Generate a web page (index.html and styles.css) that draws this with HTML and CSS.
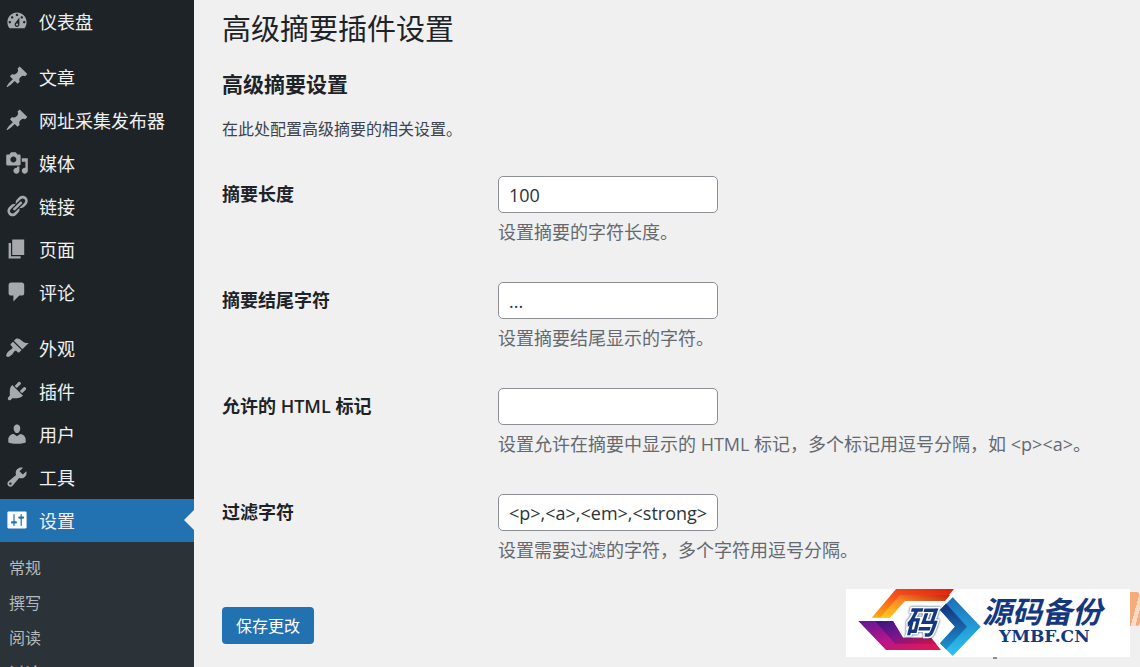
FILE: index.html
```
<!DOCTYPE html>
<html lang="zh-CN">
<head>
    <meta charset="UTF-8">
    <meta name="viewport" content="width=device-width, initial-scale=1.0">
    <title>高级摘要插件设置</title>
    <link rel="stylesheet" href="styles.css">
</head>
<body>
    <nav class="sidebar">
        <ul class="menu">
            <li>
                <a href="#"><svg viewBox="0 0 20 20"><path d="M3.76 16h12.48c1.1-1.37 1.76-3.11 1.76-5 0-4.42-3.58-8-8-8s-8 3.58-8 8c0 1.89.66 3.63 1.76 5zM10 4c.55 0 1 .45 1 1s-.45 1-1 1-1-.45-1-1 .45-1 1-1zM6 6c.55 0 1 .45 1 1s-.45 1-1 1-1-.45-1-1 .45-1 1-1zm8 0c.55 0 1 .45 1 1s-.45 1-1 1-1-.45-1-1 .45-1 1-1zm-5.37 5.55L12 7v6c0 1.1-.9 2-2 2s-2-.9-2-2c0-.57.24-1.08.63-1.45zM4 10c.55 0 1 .45 1 1s-.45 1-1 1-1-.45-1-1 .45-1 1-1zm12 0c.55 0 1 .45 1 1s-.45 1-1 1-1-.45-1-1 .45-1 1-1zm-5 3c0-.55-.45-1-1-1s-1 .45-1 1 .45 1 1 1 1-.45 1-1z"/></svg>仪表盘</a>
            </li>
            <li class="group-start">
                <a href="#"><svg viewBox="0 0 20 20"><path d="M10.44 3.02l1.82-1.82 6.36 6.35-1.83 1.82c-1.05-.68-2.48-.57-3.41.36l-.75.75c-.92.93-1.04 2.35-.35 3.41l-1.83 1.82-2.41-2.41-2.8 2.79c-.42.42-3.38 2.71-3.8 2.29s1.86-3.39 2.28-3.81l2.79-2.79L4.1 9.36l1.83-1.82c1.05.69 2.48.57 3.4-.36l.75-.75c.93-.92 1.05-2.35.36-3.41z"/></svg>文章</a>
            </li>
            <li>
                <a href="#"><svg viewBox="0 0 20 20"><path d="M10.44 3.02l1.82-1.82 6.36 6.35-1.83 1.82c-1.05-.68-2.48-.57-3.41.36l-.75.75c-.92.93-1.04 2.35-.35 3.41l-1.83 1.82-2.41-2.41-2.8 2.79c-.42.42-3.38 2.71-3.8 2.29s1.86-3.39 2.28-3.81l2.79-2.79L4.1 9.36l1.83-1.82c1.05.69 2.48.57 3.4-.36l.75-.75c.93-.92 1.05-2.35.36-3.41z"/></svg>网址采集发布器</a>
            </li>
            <li>
                <a href="#"><svg viewBox="0 0 20 20"><path d="M13 11V4c0-.55-.45-1-1-1h-1.67L9 1H5L3.67 3H2c-.55 0-1 .45-1 1v7c0 .55.45 1 1 1h10c.55 0 1-.45 1-1zM7 4.5c1.38 0 2.5 1.12 2.5 2.5S8.38 9.5 7 9.5 4.5 8.38 4.5 7 5.62 4.5 7 4.5zM14 6h5v10.5c0 1.38-1.12 2.5-2.5 2.5S14 17.88 14 16.5s1.12-2.5 2.5-2.5c.17 0 .34.02.5.05V9h-3V6zm-4 8.05V13h2v3.5c0 1.38-1.12 2.5-2.5 2.5S7 17.88 7 16.5 8.12 14 9.5 14c.17 0 .34.02.5.05z"/></svg>媒体</a>
            </li>
            <li>
                <a href="#"><svg viewBox="0 0 20 20"><path d="M17.74 2.76c1.68 1.69 1.68 4.41 0 6.1l-1.53 1.52c-1.12 1.12-2.7 1.47-4.14 1.09l2.62-2.61.76-.77.76-.76c.84-.84.84-2.2 0-3.04-.84-.85-2.2-.85-3.04 0l-.77.76-3.38 3.38c-.37-1.44-.02-3.02 1.1-4.14l1.52-1.53c1.69-1.68 4.42-1.68 6.1 0zM8.59 13.43l5.34-5.34c.42-.42.42-1.1 0-1.52-.44-.43-1.13-.39-1.53 0l-5.33 5.34c-.42.42-.42 1.1 0 1.52.44.43 1.13.39 1.52 0zm-.76 2.29l4.14-4.15c.38 1.44.03 3.02-1.09 4.14l-1.52 1.53c-1.69 1.68-4.41 1.68-6.1 0-1.68-1.68-1.68-4.42 0-6.1l1.53-1.52c1.12-1.12 2.7-1.47 4.14-1.1l-4.14 4.15c-.85.84-.85 2.2 0 3.05.84.84 2.2.84 3.04 0z"/></svg>链接</a>
            </li>
            <li>
                <a href="#"><svg viewBox="0 0 20 20"><path d="M6 15V2h10v13H6zm-1 1h8v2H3V5h2v11z"/></svg>页面</a>
            </li>
            <li>
                <a href="#"><svg viewBox="0 0 20 20"><path d="M5 2h9c1.1 0 2 .9 2 2v7c0 1.1-.9 2-2 2h-2l-5 5v-5H5c-1.1 0-2-.9-2-2V4c0-1.1.9-2 2-2z"/></svg>评论</a>
            </li>
            <li class="group-start">
                <a href="#"><svg viewBox="0 0 20 20"><path d="M14.48 11.06L7.41 3.99l1.5-1.5c.5-.56 2.3-.47 3.51.32 1.21.8 1.43 1.28 2.91 2.1 1.18.64 2.45 1.26 4.45.85zm-.71.71L6.7 4.7 4.93 6.47c-.39.39-.39 1.02 0 1.41l1.06 1.06c.39.39.39 1.03 0 1.42-.6.6-1.43 1.11-2.21 1.69-.35.26-.7.53-1.01.84C1.43 14.23.4 16.08 1.4 17.07c.99 1 2.84-.03 4.18-1.36.31-.31.58-.66.85-1.02.57-.78 1.08-1.61 1.69-2.21.39-.39 1.02-.39 1.41 0l1.06 1.06c.39.39 1.02.39 1.41 0z"/></svg>外观</a>
            </li>
            <li>
                <a href="#"><svg viewBox="0 0 20 20"><path d="M13.11 4.36L9.87 7.6 8 5.73l3.24-3.24c.35-.34 1.05-.2 1.56.32.52.51.66 1.21.31 1.55zm-8 1.77l.91-1.12 9.01 9.01-1.19.84c-.71.71-2.63 1.16-3.82 1.16H6.14L4.9 17.26c-.59.59-1.54.59-2.12 0-.59-.58-.59-1.53 0-2.12l1.24-1.24v-3.88c0-1.13.4-3.19 1.09-3.89zm7.26 3.97l3.24-3.24c.34-.35 1.04-.21 1.55.31.52.51.66 1.21.31 1.55l-3.24 3.25z"/></svg>插件</a>
            </li>
            <li>
                <a href="#"><svg viewBox="0 0 20 20"><path d="M10 9.25c-2.27 0-2.73-3.44-2.73-3.44C7 4.02 7.82 2 9.97 2c2.16 0 2.98 2.02 2.71 3.81 0 0-.41 3.44-2.68 3.44zm0 2.57L12.72 10c2.39 0 4.52 2.33 4.52 4.53v2.49s-3.65 1.13-7.24 1.13c-3.65 0-7.24-1.13-7.24-1.13v-2.49c0-2.25 1.94-4.48 4.47-4.48z"/></svg>用户</a>
            </li>
            <li>
                <a href="#"><svg viewBox="0 0 20 20"><path d="M16.68 9.77c-1.34 1.34-3.3 1.67-4.95.99l-5.41 6.52c-.99.99-2.59.99-3.58 0s-.99-2.59 0-3.57l6.52-5.42c-.68-1.65-.35-3.61.99-4.95 1.28-1.28 3.12-1.62 4.72-1.06l-2.89 2.89 2.82 2.82 2.86-2.87c.53 1.58.18 3.39-1.08 4.65zM3.81 16.21c.4.39 1.04.39 1.43 0 .4-.4.4-1.04 0-1.43-.39-.4-1.03-.4-1.43 0-.39.39-.39 1.03 0 1.43z"/></svg>工具</a>
            </li>
            <li class="current">
                <a href="#"><svg viewBox="0 0 20 20"><path d="M18 16V4c0-.55-.45-1-1-1H3c-.55 0-1 .45-1 1v12c0 .55.45 1 1 1h14c.55 0 1-.45 1-1zM8 11h1c.55 0 1 .45 1 1s-.45 1-1 1H8v1.5c0 .28-.22.5-.5.5s-.5-.22-.5-.5V13H6c-.55 0-1-.45-1-1s.45-1 1-1h1V5.5c0-.28.22-.5.5-.5s.5.22.5.5V11zm5-2h-1c-.55 0-1-.45-1-1s.45-1 1-1h1V5.5c0-.28.22-.5.5-.5s.5.22.5.5V7h1c.55 0 1 .45 1 1s-.45 1-1 1h-1v5.5c0 .28-.22.5-.5.5s-.5-.22-.5-.5V9z"/></svg>设置</a>
            </li>
        </ul>
        <ul class="submenu">
            <li><a href="#">常规</a></li>
            <li><a href="#">撰写</a></li>
            <li><a href="#">阅读</a></li>
            <li><a href="#">讨论</a></li>
        </ul>
    </nav>

    <main class="content">
        <h1>高级摘要插件设置</h1>
        <h2>高级摘要设置</h2>
        <p class="intro">在此处配置高级摘要的相关设置。</p>

        <form>
            <div class="form-row">
                <label for="excerpt-length">摘要长度</label>
                <div class="field">
                    <input type="text" id="excerpt-length" value="100">
                    <p class="description">设置摘要的字符长度。</p>
                </div>
            </div>
            <div class="form-row">
                <label for="excerpt-end">摘要结尾字符</label>
                <div class="field">
                    <input type="text" id="excerpt-end" value="...">
                    <p class="description">设置摘要结尾显示的字符。</p>
                </div>
            </div>
            <div class="form-row">
                <label for="allowed-tags">允许的 HTML 标记</label>
                <div class="field">
                    <input type="text" id="allowed-tags">
                    <p class="description">设置允许在摘要中显示的 HTML 标记，多个标记用逗号分隔，如 &lt;p&gt;&lt;a&gt;。</p>
                </div>
            </div>
            <div class="form-row">
                <label for="filter-chars">过滤字符</label>
                <div class="field">
                    <input type="text" id="filter-chars" value="&lt;p&gt;,&lt;a&gt;,&lt;em&gt;,&lt;strong&gt;">
                    <p class="description">设置需要过滤的字符，多个字符用逗号分隔。</p>
                </div>
            </div>
            <button type="submit">保存更改</button>
        </form>
    </main>

    <div class="side-tab"></div>
    <div class="watermark">
        <svg viewBox="0 0 284 68">
            <defs>
                <linearGradient id="orange" x1="0" y1="1" x2="1" y2="0">
                    <stop offset="0" stop-color="#ffb010"/>
                    <stop offset="0.5" stop-color="#f7541f"/>
                    <stop offset="1" stop-color="#d9200f"/>
                </linearGradient>
                <linearGradient id="yellow" x1="0" y1="1" x2="1" y2="0">
                    <stop offset="0" stop-color="#ffd21c"/>
                    <stop offset="0.5" stop-color="#fb8a25"/>
                    <stop offset="1" stop-color="#c4200f"/>
                </linearGradient>
                <linearGradient id="purple" x1="0" y1="0" x2="1" y2="1">
                    <stop offset="0" stop-color="#5a1a94"/>
                    <stop offset="0.5" stop-color="#b8158c"/>
                    <stop offset="1" stop-color="#e8174b"/>
                </linearGradient>
                <linearGradient id="violet" x1="0" y1="0" x2="1" y2="1">
                    <stop offset="0" stop-color="#33187a"/>
                    <stop offset="0.5" stop-color="#7a1590"/>
                    <stop offset="1" stop-color="#c8173f"/>
                </linearGradient>
                <linearGradient id="blue" x1="0" y1="0" x2="0" y2="1">
                    <stop offset="0" stop-color="#1b6fb8"/>
                    <stop offset="1" stop-color="#2cc4f2"/>
                </linearGradient>
                <linearGradient id="navy" x1="0" y1="0" x2="0" y2="1">
                    <stop offset="0" stop-color="#142f78"/>
                    <stop offset="1" stop-color="#1c93d2"/>
                </linearGradient>
            </defs>
            <path fill="url(#orange)" d="M25.7 28.7L50 0h58L99 11H57L43 28.7z"/>
            <path fill="url(#yellow)" d="M34 28.7L54 6h50l-5 6H59L44 28.7z"/>
            <path fill="url(#purple)" d="M12.3 32H47l10 16.7h28L95 61H40z"/>
            <path fill="url(#violet)" d="M29 32h18l10 16.7h28l5 6H49z"/>
            <path fill="url(#blue)" d="M106.7 8.3l28 29.4-28 29.3L94 54.3l15-16.6L94 21z"/>
            <path fill="url(#navy)" d="M100 14.5l21 23.2-21 22.8-6-6.2 15-16.6L94 21z"/>
            <text class="mark" x="58" y="45">码</text>
            <text class="name" x="136" y="34">源码备份</text>
            <text class="domain" x="153" y="53">YMBF.CN</text>
        </svg>
    </div>
</body>
</html>
```

FILE: styles.css
```
* {
    box-sizing: border-box;
    margin: 0;
    padding: 0;
}

body {
    display: flex;
    height: 100vh;
    overflow: hidden;
    font-family: "Open Sans", "Noto Sans CJK SC", sans-serif;
    font-size: 18px;
    background-color: #f0f0f1;
    color: #1d2327;
}

/* sidebar */
.sidebar {
    width: 194px;
    flex-shrink: 0;
    background-color: #1d2327;
}

ul {
    list-style: none;
}

.menu a {
    display: flex;
    align-items: center;
    gap: 10px;
    height: 43px;
    padding: 0 0 2px 5px;
    color: #f0f0f1;
    text-decoration: none;
}

.menu svg {
    width: 24px;
    height: 24px;
    fill: #a7aaad;
}

.menu .group-start {
    margin-top: 13px;
}

.menu .current {
    position: relative;
    background-color: #2271b1;
}

.menu .current svg {
    fill: #fff;
}

.menu .current::after {
    content: "";
    position: absolute;
    right: 0;
    top: 11px;
    border: 10px solid transparent;
    border-left-width: 0;
    border-right-color: #f0f0f1;
}

.submenu {
    padding-top: 9px;
    background-color: #2c3338;
}

.submenu a {
    display: block;
    padding-left: 9px;
    font-size: 16px;
    line-height: 35px;
    color: #b4b9be;
    text-decoration: none;
}

/* settings page */
.content {
    flex: 1;
    padding: 7px 28px;
}

h1 {
    font-size: 29px;
    font-weight: 400;
    line-height: 44px;
}

h2 {
    margin-top: 18px;
    font-size: 21px;
    line-height: 30px;
}

.intro {
    margin: 17px 0 16px;
    font-size: 16px;
    line-height: 26px;
    color: #3c434a;
}

.form-row {
    display: flex;
    padding: 18px 0;
}

.form-row label {
    width: 276px;
    font-weight: 600;
    line-height: 36px;
}

.field input {
    display: block;
    width: 220px;
    height: 37px;
    padding: 0 8px 0 10px;
    border: 1px solid #8c8f94;
    border-radius: 5px;
    background-color: #fff;
    font: inherit;
    color: #2c3338;
}

.description {
    margin-top: 5px;
    line-height: 28px;
    color: #646970;
}

button {
    height: 37px;
    margin-top: 25px;
    padding: 0 14px 2px;
    border: none;
    border-radius: 4px;
    background-color: #2271b1;
    color: #fff;
    font-family: inherit;
    font-size: 16px;
}

/* site badge over the page */
.watermark {
    position: fixed;
    right: 10px;
    bottom: 10px;
    width: 284px;
    height: 68px;
    background-color: #fff;
}

.watermark::after {
    content: "";
    position: absolute;
    left: 147px;
    top: 68px;
    width: 4px;
    height: 2px;
    background-color: #8c8f94;
}

.watermark svg {
    display: block;
}

.watermark text {
    fill: #14387f;
    font-weight: 700;
}

.watermark .mark {
    font-size: 32px;
    font-style: italic;
    stroke: #fff;
    stroke-width: 3px;
    paint-order: stroke;
    filter: drop-shadow(0 0 1px #14387f);
}

.watermark .name {
    font-size: 30px;
    font-style: italic;
}

.watermark .domain {
    font-family: "DejaVu Serif", serif;
    font-size: 17px;
}

.side-tab {
    position: fixed;
    right: 0;
    bottom: 41px;
    width: 14px;
    height: 34px;
    border-radius: 4px;
    background: linear-gradient(105deg, #f5ab7a 60%, #f9dcc8 60%, #f9dcc8 80%, #f5ab7a 80%);
}
```
